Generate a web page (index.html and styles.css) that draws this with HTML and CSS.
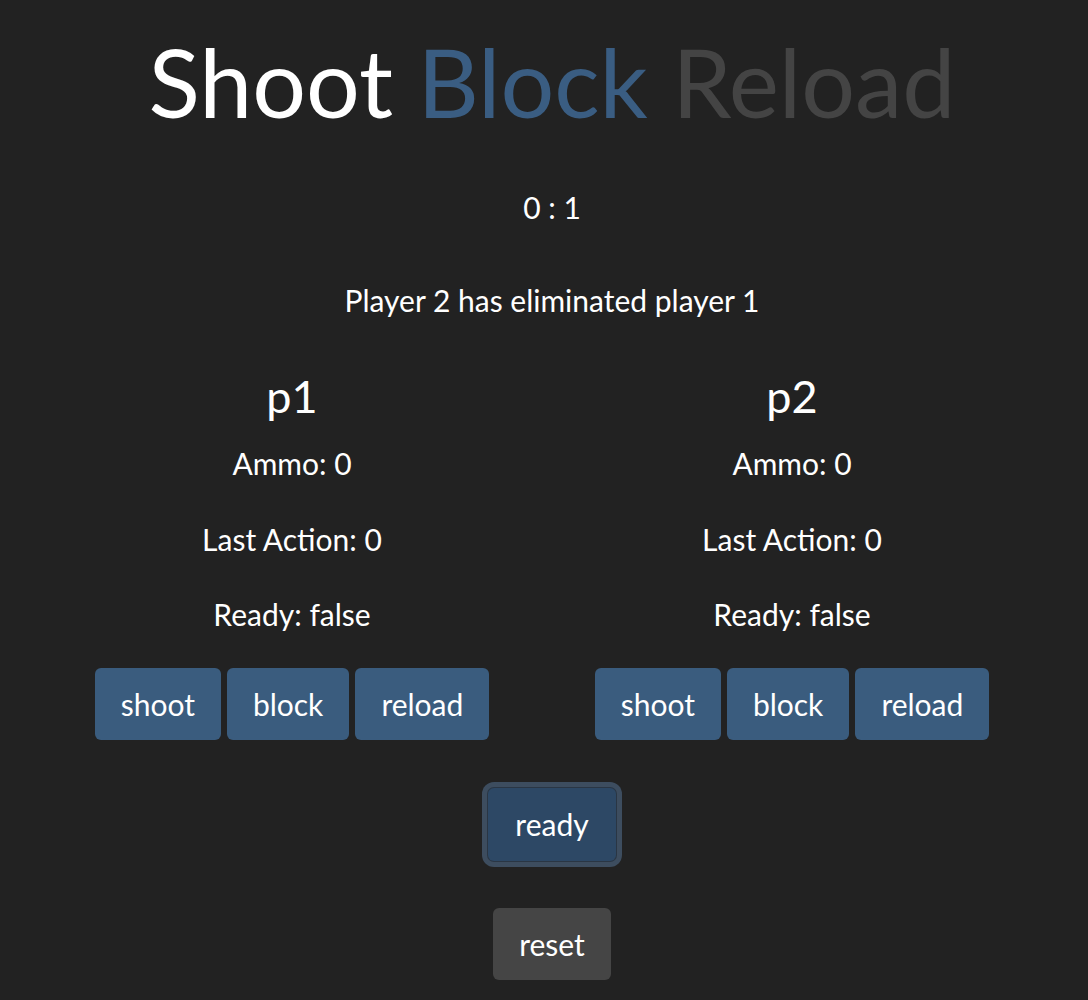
FILE: index.html
```html
<!DOCTYPE html>
<html lang="en">
<head>
<meta charset="utf-8">
<title>Shoot Block Reload</title>
<link rel="stylesheet" href="styles.css">
</head>
<body>
<main class="page">
  <h1 class="title"><span class="t-shoot">Shoot</span> <span class="t-block">Block</span> <span class="t-reload">Reload</span></h1>
  <div class="score">0 : 1</div>
  <div class="message">Player 2 has eliminated player 1</div>
  <section class="players">
    <div class="player">
      <h2 class="player-name">p1</h2>
      <div class="stat stat-first">Ammo: 0</div>
      <div class="stat">Last Action: 0</div>
      <div class="stat stat-last">Ready: false</div>
      <div class="actions">
        <button class="btn btn-action">shoot</button>
        <button class="btn btn-action">block</button>
        <button class="btn btn-action">reload</button>
      </div>
    </div>
    <div class="player">
      <h2 class="player-name">p2</h2>
      <div class="stat stat-first">Ammo: 0</div>
      <div class="stat">Last Action: 0</div>
      <div class="stat stat-last">Ready: false</div>
      <div class="actions">
        <button class="btn btn-action">shoot</button>
        <button class="btn btn-action">block</button>
        <button class="btn btn-action">reload</button>
      </div>
    </div>
  </section>
  <button class="btn btn-ready">ready</button>
  <button class="btn btn-reset">reset</button>
</main>
</body>
</html>
```

FILE: styles.css
```css
html, body {
  margin: 0;
  padding: 0;
  background: #222222;
}

body {
  font-family: Lato, "Open Sans", sans-serif;
  color: #ffffff;
  font-size: 30px;
  line-height: 36px;
}

.page {
  display: flex;
  flex-direction: column;
  align-items: center;
  padding: 24px 0 0 16px;
  min-height: 1000px;
  box-sizing: border-box;
}

.title {
  margin: 0;
  font-size: 95px;
  font-weight: 400;
  line-height: 1.2;
  white-space: nowrap;
}

.t-shoot { color: #ffffff; }
.t-block { color: #3a5d82; }
.t-reload { color: #444444; }

.score {
  margin-top: 51px;
}

.message {
  margin-top: 57px;
}

.players {
  display: flex;
  justify-content: center;
  align-self: stretch;
  margin-right: 20px;
  margin-top: 51px;
}

.player {
  width: 500px;
  display: flex;
  flex-direction: column;
  align-items: center;
}

.player-name {
  margin: 0;
  font-size: 45px;
  font-weight: 400;
  line-height: 1.2;
}

.stat {
  margin-top: 40px;
}

.stat-first {
  margin-top: 22px;
}

.stat-last {
  margin-top: 39px;
}

.actions {
  display: flex;
  gap: 6px;
  margin-top: 36px;
}

.btn {
  font-family: Lato, "Open Sans", sans-serif;
  font-size: 30px;
  line-height: 36px;
  color: #ffffff;
  border: none;
  border-radius: 6px;
  padding: 18px 26px;
  cursor: pointer;
}

.btn-action {
  background: #3a5c7e;
}

.btn-ready {
  margin-top: 48px;
  background: #2d4865;
  box-shadow: 0 0 0 1px #2a3644, 0 0 0 6px #3d4d5f;
  padding: 18px 27px 19px;
}

.btn-reset {
  margin-top: 47px;
  background: #454545;
}
```
